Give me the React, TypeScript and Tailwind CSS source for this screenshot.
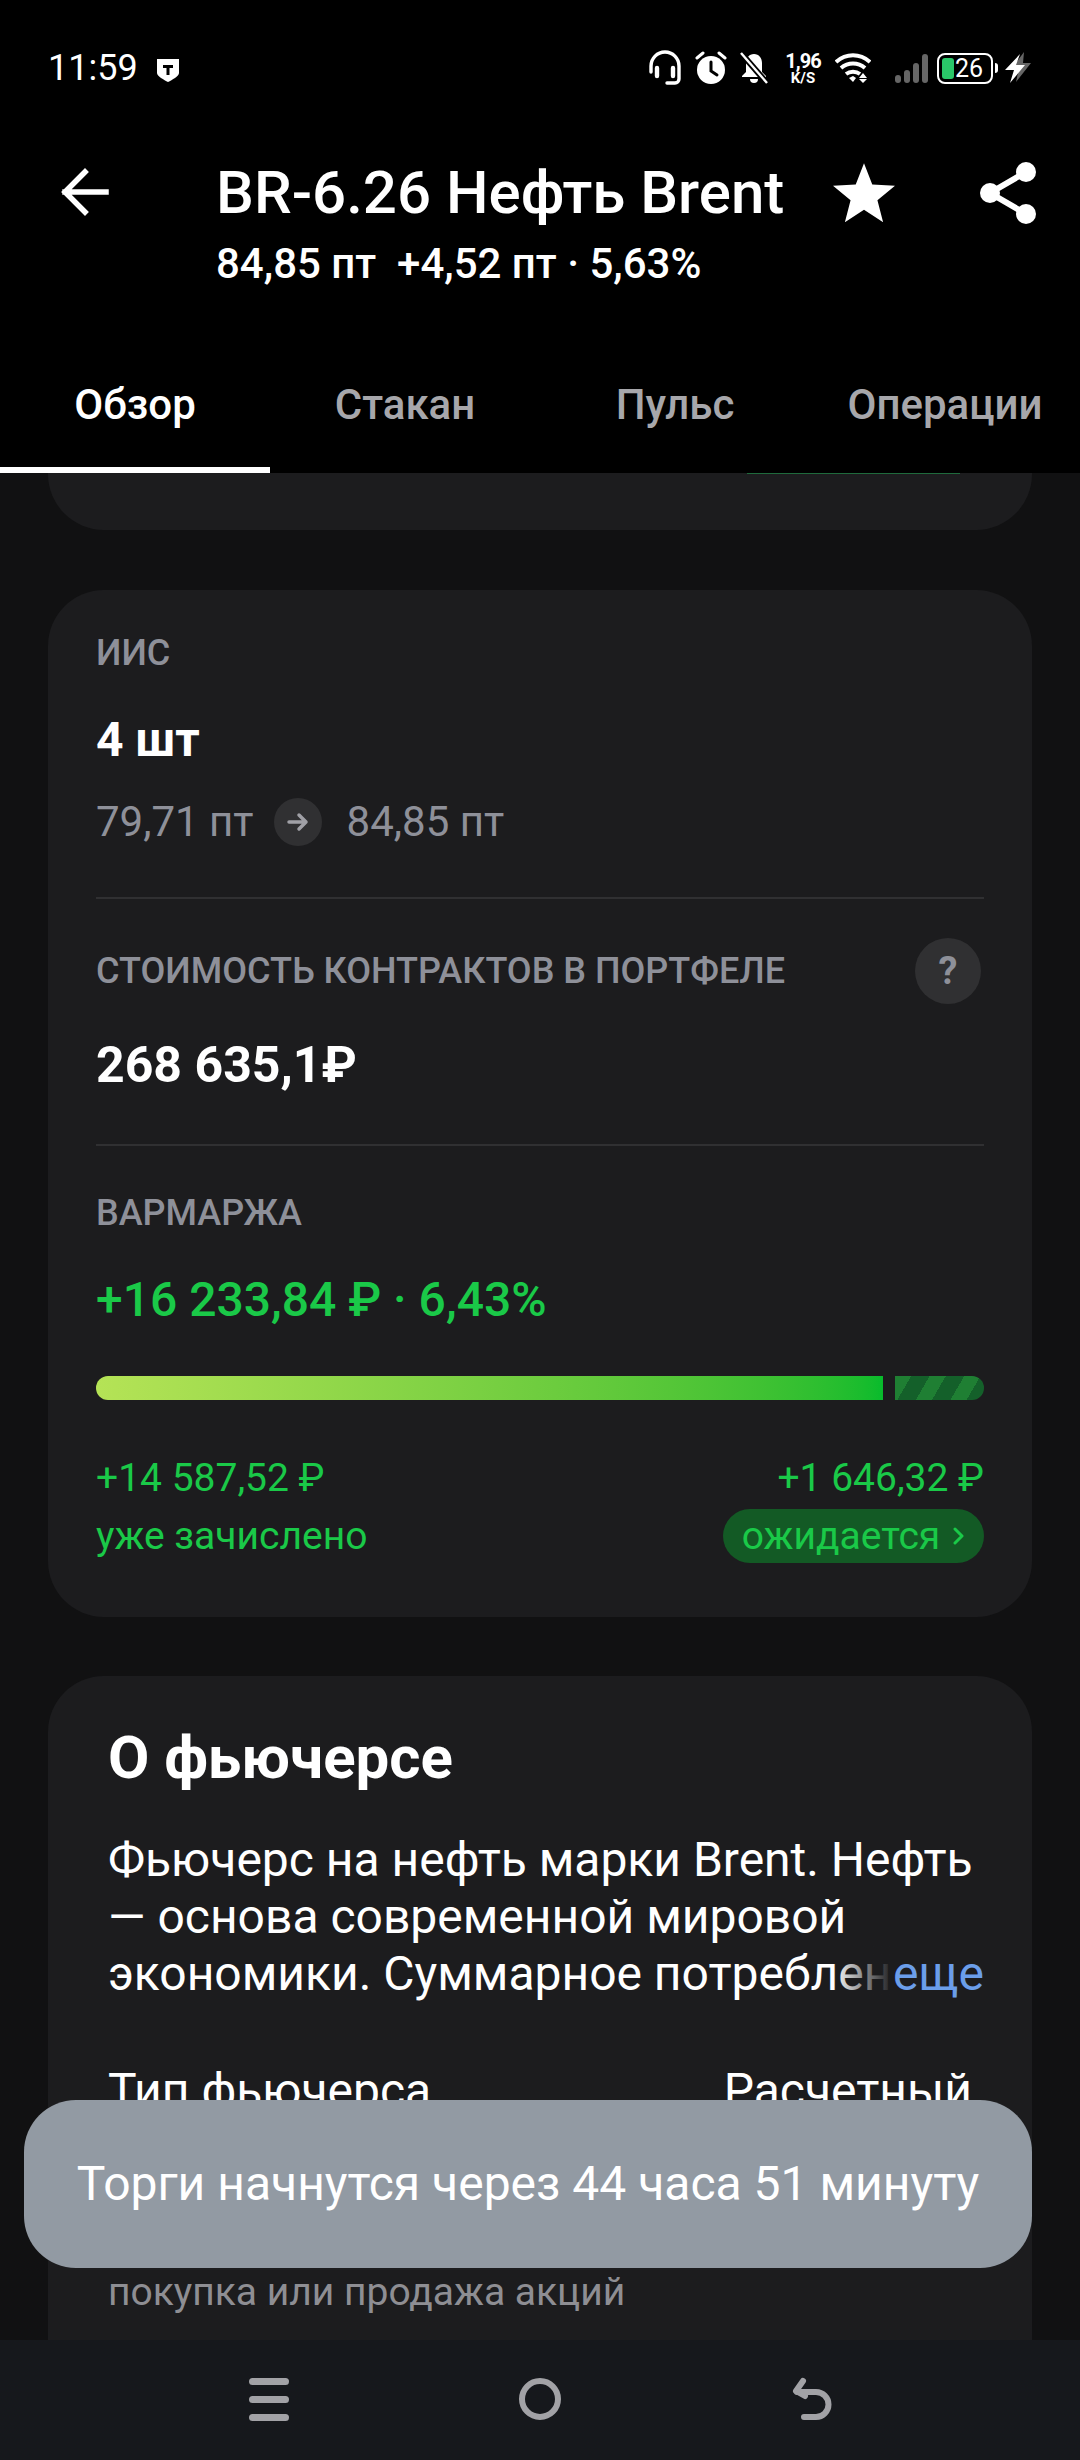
import React from "react";

const StatusIcons = () => (
  <div className="flex items-center text-white">
    <svg width="34" height="36" viewBox="0 0 34 36" fill="none" stroke="currentColor" strokeWidth="3.4" strokeLinecap="round" className="mr-[13px]">
      <path d="M3 22V16a14 14 0 0 1 28 0v13a4 4 0 0 1-4 4h-8" />
      <path d="M9 18v8M25 18v8" strokeWidth="4.4" />
    </svg>
    <svg width="32" height="34" viewBox="0 0 32 34" className="mr-[13px]">
      <circle cx="16" cy="19" r="14" fill="currentColor" />
      <path d="M16 11v9l6 4" fill="none" stroke="#000" strokeWidth="3" strokeLinecap="round" />
      <path d="M2 7l6-5M30 7l-6-5" fill="none" stroke="currentColor" strokeWidth="3" strokeLinecap="round" />
    </svg>
    <svg width="28" height="32" viewBox="0 0 28 32" className="mr-[17px]">
      <path d="M14 2c-5 0-8 4-8 9v9l-4 4v1h24v-1l-4-4v-9c0-5-3-9-8-9z" fill="currentColor" />
      <path d="M10 27h8a4 4 0 0 1-8 0z" fill="currentColor" />
      <path d="M1 1l26 30" stroke="#000" strokeWidth="6" />
      <path d="M1 1l26 30" stroke="currentColor" strokeWidth="2.4" />
    </svg>
    <div className="flex w-[36px] flex-col items-center mr-[14px] font-bold leading-none">
      <span className="text-[20px] leading-[20px] tracking-[-1px]">1,96</span>
      <span className="text-[15px] leading-[15px]">K/S</span>
    </div>
    <svg width="36" height="30" viewBox="0 0 36 30" fill="none" stroke="currentColor" strokeWidth="4" className="mr-[24px]">
      <path d="M1 9c10-9 24-9 34 0" />
      <path d="M6 15c7-6 17-6 24 0" />
      <path d="M11 21c4-3 10-3 14 0" />
      <path d="M14 25l4-2 3 2-3 4z" fill="currentColor" stroke="none" />
      <path d="M28 20l4 5h-8zM24 26h8l-4 4z" fill="currentColor" stroke="none" />
    </svg>
    <div className="flex h-[30px] items-end gap-[3px] mr-[9px]">
      <span className="h-[8px] w-[6px] rounded-full bg-[#666]" />
      <span className="h-[13px] w-[6px] rounded-full bg-[#666]" />
      <span className="h-[20px] w-[6px] rounded-full bg-[#666]" />
      <span className="h-[29px] w-[6px] rounded-full bg-[#666]" />
    </div>
    <div className="flex h-[31px] w-[56px] items-center rounded-[8px] border-2 border-white p-[3px]">
      <span className="h-full w-[12px] rounded-[3px] bg-[#2ac769]" />
      <span className="ml-[1px] text-[25px] leading-none">26</span>
    </div>
    <span className="ml-[2px] mr-[6px] h-[10px] w-[3px] rounded-r bg-white" />
    <svg width="28" height="32" viewBox="0 0 28 32">
      <path d="M20 0L8 16h7l-3 14L27 11h-8z" fill="#666" />
      <path d="M16 2L1 18h9l-4 13 15-18h-9z" fill="currentColor" />
    </svg>
  </div>
);

const tabs = ["Обзор", "Стакан", "Пульс", "Операции"];

const Header = () => (
  <div className="h-[473px] shrink-0 bg-black text-white">
    <div className="flex h-[130px] items-start justify-between pl-[48px] pr-[48px] pt-[50px]">
      <div className="flex items-center">
        <span className="text-[36px] leading-[36px]">11:59</span>
        <svg width="24" height="26" viewBox="0 0 24 26" className="ml-[18px] mt-[3px]">
          <path d="M1 2h22v14c0 3-7 7-11 9C8 23 1 19 1 16z" fill="#fff" />
          <path d="M7 8h10v3h-3.5v7h-3v-7H7z" fill="#000" />
        </svg>
      </div>
      <StatusIcons />
    </div>
    <div className="flex h-[170px] pl-[60px] pt-[30px]">
      <svg width="50" height="50" viewBox="0 0 50 50" fill="none" stroke="currentColor" strokeWidth="5.5" strokeLinecap="square" className="mt-[7px] shrink-0">
        <path d="M46 25H5M25 5L5 25l20 20" />
      </svg>
      <div className="ml-[106px] w-[597px] shrink-0">
        <div className="text-[60px] font-medium leading-[66px] whitespace-nowrap">BR-6.26 Нефть Brent</div>
        <div className="mt-[15px] text-[42px] font-medium leading-[46px] whitespace-pre">84,85 пт  +4,52 пт · 5,63%</div>
      </div>
      <svg width="62" height="60" viewBox="0 0 24 23" fill="currentColor" className="ml-[20px] mt-[3px] shrink-0">
        <path d="M12 0l3.2 8.2 8.8.5-6.8 5.6 2.2 8.5L12 18l-7.4 4.8 2.2-8.5L0 8.7l8.8-.5z" />
      </svg>
      <svg width="56" height="62" viewBox="0 0 56 62" className="ml-[85px] mt-[2px] shrink-0" fill="currentColor">
        <circle cx="46" cy="10" r="10" />
        <circle cx="10" cy="31" r="10" />
        <circle cx="46" cy="52" r="10" />
        <path d="M46 10L10 31l36 21" fill="none" stroke="currentColor" strokeWidth="6" />
      </svg>
    </div>
    <div className="grid h-[173px] grid-cols-4">
      {tabs.map((tab, i) => (
        <div key={tab} className={`flex flex-col items-center justify-end ${i === 0 ? "border-b-[6px] border-white text-white" : "pb-[6px] text-[#a7a7ab]"}`}>
          <span className="mb-[38px] text-[42px] font-medium leading-[48px] whitespace-nowrap">{tab}</span>
        </div>
      ))}
    </div>
  </div>
);

const Label = ({ children }: { children: React.ReactNode }) => (
  <div className="text-[36px] font-medium leading-[40px] text-[#8e9099]">{children}</div>
);

const PositionCard = () => (
  <div className="mx-[48px] mt-[60px] h-[1027px] rounded-[56px] bg-[#1c1c1e] px-[48px] pt-[43px]">
    <Label>ИИС</Label>
    <div className="mt-[42px] text-[48px] font-bold leading-[50px] text-white">4 шт</div>
    <div className="mt-[32px] flex items-center text-[42px] leading-[50px] text-[#8e9099]">
      <span>79,71 пт</span>
      <span className="ml-[20px] flex h-[48px] w-[48px] items-center justify-center rounded-full bg-[#303032]">
        <svg width="22" height="22" viewBox="0 0 22 22" fill="none" stroke="#a0a0a6" strokeWidth="3.5" strokeLinecap="round" strokeLinejoin="round">
          <path d="M2 11h17M12 4l7 7-7 7" />
        </svg>
      </span>
      <span className="ml-[25px]">84,85 пт</span>
    </div>
    <div className="mt-[50px] h-[2px] bg-[#303032]" />
    <div className="mt-[39px] flex h-[66px] items-center justify-between pr-[3px]">
      <Label>СТОИМОСТЬ КОНТРАКТОВ В ПОРТФЕЛЕ</Label>
      <span className="flex h-[66px] w-[66px] items-center justify-center rounded-full bg-[#303032] text-[38px] font-bold text-[#8e9099]">?</span>
    </div>
    <div className="mt-[34px] text-[50px] font-bold leading-[54px] text-white">268 635,1₽</div>
    <div className="mt-[52px] h-[2px] bg-[#303032]" />
    <div className="mt-[47px]"><Label>ВАРМАРЖА</Label></div>
    <div className="mt-[40px] text-[48px] font-medium leading-[54px] text-[#1ac948]">+16 233,84 ₽ · 6,43%</div>
    <div className="mt-[49px] flex h-[24px] gap-[12px]">
      <div className="w-[787px] rounded-l-[12px] bg-gradient-to-r from-[#b5e356] to-[#07bb2c]" />
      <div className="flex-1 rounded-r-[12px] bg-[repeating-linear-gradient(120deg,#1f7f33_0px,#1f7f33_14px,#14602a_14px,#14602a_30px)]" />
    </div>
    <div className="mt-[55px] flex items-center justify-between text-[39px] leading-[46px] text-[#1ac948]">
      <span>+14 587,52 ₽</span>
      <span>+1 646,32 ₽</span>
    </div>
    <div className="mt-[6px] flex items-center justify-between text-[39px] text-[#1ac948]">
      <span>уже зачислено</span>
      <span className="flex h-[54px] w-[261px] items-center justify-center gap-[13px] rounded-full bg-[#135a25]">
        ожидается
        <svg width="12" height="20" viewBox="0 0 12 20" fill="none" stroke="currentColor" strokeWidth="3" strokeLinecap="round" strokeLinejoin="round">
          <path d="M2 3l7 7-7 7" />
        </svg>
      </span>
    </div>
  </div>
);

const FuturesCard = () => (
  <div className="mx-[48px] mt-[59px] flex-1 rounded-t-[56px] bg-[#1c1c1e] pl-[60px] pr-[48px] pt-[52px]">
    <div className="text-[60px] font-bold leading-[60px] text-white">О фьючерсе</div>
    <div className="relative mt-[43px] overflow-hidden text-[48px] leading-[57px] text-white whitespace-nowrap">
      <div>Фьючерс на нефть марки Brent. Нефть</div>
      <div>— основа современной мировой</div>
      <div>экономики. Суммарное потреблен</div>
      <span className="absolute bottom-0 right-0 flex text-[#6b9eea]">
        <span className="absolute bottom-0 left-[-60px] top-0 w-[60px] bg-gradient-to-r from-transparent to-[#1c1c1e]" />
        еще
      </span>
    </div>
    <div className="mt-[62px] flex items-center justify-between pr-[12px] text-[48px] leading-[54px] text-white">
      <span>Тип фьючерса</span>
      <span>Расчетный</span>
    </div>
    <div className="mt-[151px] text-[39px] leading-[46px] text-[#8e8e93]">покупка или продажа акций</div>
  </div>
);

const NavBar = () => (
  <div className="flex h-[120px] shrink-0 items-start justify-center bg-[#16181c] pt-[37px] text-[#a2a2a6]">
    <svg width="40" height="44" viewBox="0 0 40 44" fill="currentColor">
      <rect x="0" y="1" width="40" height="7" rx="3.5" />
      <rect x="0" y="19" width="40" height="7" rx="3.5" />
      <rect x="0" y="37" width="40" height="7" rx="3.5" />
    </svg>
    <svg width="44" height="44" viewBox="0 0 44 44" fill="none" stroke="currentColor" strokeWidth="6" className="ml-[229px]">
      <circle cx="22" cy="22" r="18" />
    </svg>
    <svg width="40" height="44" viewBox="0 0 40 44" fill="none" stroke="currentColor" strokeWidth="6" strokeLinecap="round" strokeLinejoin="round" className="ml-[230px]">
      <path d="M12 40h12a12 12 0 0 0 0-25H5" />
      <path d="M11 4L4 14l9 5" />
    </svg>
  </div>
);

export default function App() {
  return (
    <div className="relative flex h-[2460px] w-[1080px] flex-col overflow-hidden bg-[#111112] font-['Roboto',sans-serif]">
      <Header />
      <div className="flex min-h-0 flex-1 flex-col overflow-hidden">
        <div className="relative mx-[48px] h-[57px] shrink-0 rounded-b-[56px] bg-[#1c1c1e]">
          <div className="absolute left-[699px] top-0 h-[1px] w-[213px] bg-[#1f6a3c]" />
        </div>
        <PositionCard />
        <FuturesCard />
      </div>
      <NavBar />
      <div className="absolute left-[24px] top-[2100px] flex h-[168px] w-[1008px] items-center justify-center rounded-[52px] bg-[#929aa3] text-[48px] text-white whitespace-nowrap">
        Торги начнутся через 44 часа 51 минуту
      </div>
    </div>
  );
}
